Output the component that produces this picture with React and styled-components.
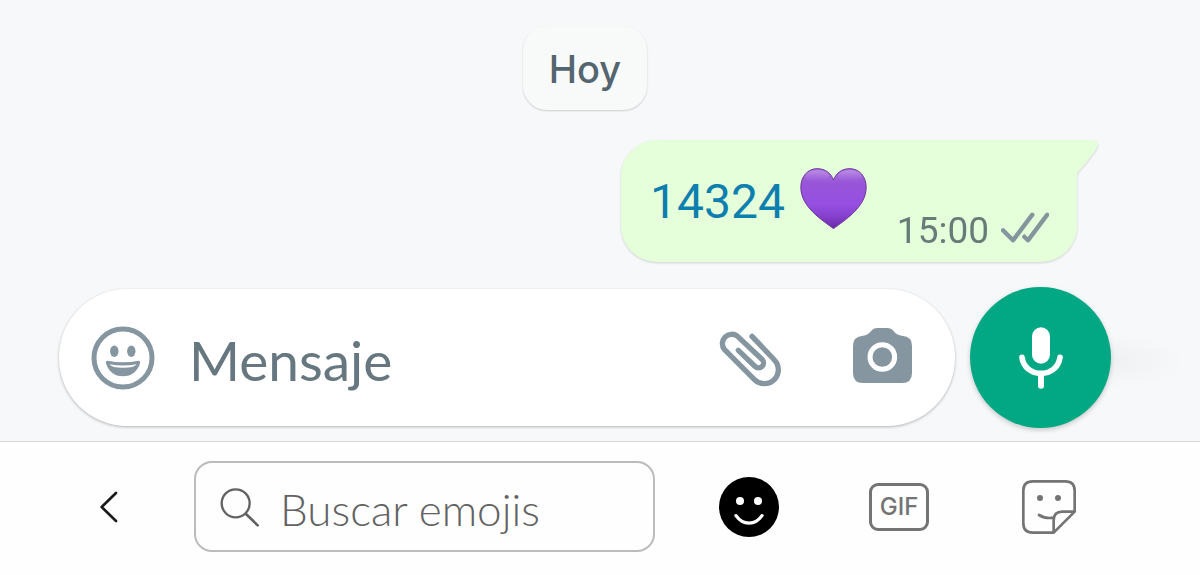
import React from 'react';
import styled, { createGlobalStyle } from 'styled-components';

const GlobalStyle = createGlobalStyle`
  * {
    box-sizing: border-box;
  }
  body {
    margin: 0;
    background-color: #fefefe;
    font-family: Lato, Roboto, sans-serif;
  }
  button {
    border: none;
    padding: 0;
    background: none;
    cursor: pointer;
  }
  svg {
    display: block;
    flex: none;
  }
`;

// message area above the keyboard
const Chat = styled.main`
  display: flex;
  flex-direction: column;
  padding: 26px 89px 13px 59px;
  background-color: #f6f8fa; // light grey
  border-bottom: 1px solid #d8d9da;
`;

const DateChip = styled.div`
  align-self: center;
  margin-bottom: 30px;
  padding: 21px 26px 19px;
  border-radius: 24px;
  background-color: #f8faf9;
  box-shadow: 0 1px 2px rgba(0, 0, 0, 0.18);
  color: #54656f;
  font-family: Inter, sans-serif;
  font-weight: 500;
  font-size: 38px;
  line-height: 44px;
`;

// drop-shadow so that the tail gets the same shadow as the bubble
const Bubble = styled.div`
  position: relative;
  display: flex;
  align-items: flex-end;
  align-self: flex-end;
  height: 122px;
  margin-right: 34px;
  margin-bottom: 25px;
  padding: 0 28px 12px 29px;
  border-radius: 36px 0 36px 36px;
  background-color: #e5ffdb; // light green
  filter: drop-shadow(0 1px 1px rgba(0, 0, 0, 0.16));
`;

const Tail = styled.svg`
  position: absolute;
  top: 0;
  left: 100%;
`;

const NumberLink = styled.a`
  margin-right: 15px;
  padding-bottom: 18px;
  color: #0d7fae; // blue
  font-family: Roboto, sans-serif;
  font-size: 48px;
  line-height: 60px;
  text-decoration: none;
`;

const HeartWrap = styled.span`
  margin-right: 30px;
  padding-bottom: 21px;
`;

const Time = styled.time`
  margin-right: 12px;
  color: #667c78;
  font-family: Roboto, sans-serif;
  font-size: 37px;
  line-height: 38px;
`;

const TickWrap = styled.span`
  padding-bottom: 6px;
`;

const Composer = styled.form`
  display: flex;
  align-items: center;
  gap: 15px;
`;

const MessageBox = styled.div`
  display: flex;
  align-items: center;
  flex: 1;
  min-width: 0;
  height: 137px;
  padding: 0 43px 0 32px;
  border-radius: 68px;
  background-color: #fff;
  box-shadow: 0 1px 3px rgba(0, 0, 0, 0.28);
`;

const TextField = styled.input`
  flex: 1;
  min-width: 0;
  border: none;
  outline: none;
  padding: 0;
  background: none;
  color: ${(props) => props.$color};
  font-family: ${(props) => props.$font};
  font-size: ${(props) => props.$size};
  font-weight: ${(props) => props.$weight};
  line-height: 64px;

  &::placeholder {
    color: ${(props) => props.$color};
    opacity: 1;
  }
`;

const MessageField = styled(TextField)`
  margin-left: 34px;
  padding-top: 4px;
`;

const IconButton = styled.button`
  color: #8696a0; // grey
`;

const CameraButton = styled(IconButton)`
  margin-left: 71px;
`;

const MicButton = styled.button`
  position: relative;
  display: flex;
  align-items: center;
  justify-content: center;
  width: 141px;
  height: 141px;
  border-radius: 50%;
  background-color: #02a884; // green
  box-shadow: 0 2px 5px rgba(0, 0, 0, 0.2);

  &::after {
    content: '';
    position: absolute;
    top: 46px;
    left: 100%;
    width: 76px;
    height: 56px;
    background: radial-gradient(ellipse at left, rgba(0, 0, 0, 0.03), transparent 70%);
  }
`;

const Keyboard = styled.nav`
  display: flex;
  align-items: center;
  padding: 19px 76px 23px 64px;
`;

const KeyButton = styled.button`
  display: flex;
  align-items: center;
  justify-content: center;
  width: ${(props) => props.$width};
  height: 91px;
  color: ${(props) => props.$color};
`;

const SearchBox = styled.label`
  display: flex;
  align-items: center;
  flex: 1;
  min-width: 0;
  height: 91px;
  margin: 0 19px 0 40px;
  padding: 0 24px;
  border: 2px solid #bcbcbc;
  border-radius: 18px;
`;

const SearchField = styled(TextField)`
  margin-left: 20px;
  padding-top: 4px;
`;

const GifBadge = styled.span`
  display: flex;
  align-items: center;
  justify-content: center;
  width: 60px;
  height: 48px;
  border: 3px solid #747474;
  border-radius: 9px;
  font-family: Inter, sans-serif;
  font-weight: 500;
  font-size: 24px;
  line-height: 24px;
`;

const Heart = () => (
  <svg width="67" height="61" viewBox="571 114 200 183" role="img" aria-label="corazón morado">
    <defs>
      <linearGradient id="heartFill" x1="0" y1="0" x2="0" y2="1">
        <stop offset="0" stopColor="#a873dc" />
        <stop offset="0.25" stopColor="#9855d8" />
        <stop offset="0.6" stopColor="#964fe2" />
        <stop offset="0.8" stopColor="#8540cc" />
        <stop offset="1" stopColor="#6a27a8" />
      </linearGradient>
      <linearGradient id="heartShine" x1="0" y1="0" x2="0" y2="1">
        <stop offset="0" stopColor="#d3b3ee" stopOpacity="0.45" />
        <stop offset="1" stopColor="#b47be6" stopOpacity="0" />
      </linearGradient>
    </defs>
    <path
      d="M671 296C640 272 573 232 573 172C573 138 595 116 622 116C647 116 664 130 671 150C678 130 695 116 720 116C747 116 769 138 769 172C769 232 702 272 671 296Z"
      fill="url(#heartFill)"
      stroke="#6b3399"
      strokeWidth="3"
    />
    <ellipse cx="622" cy="138" rx="36" ry="17" fill="url(#heartShine)" />
    <ellipse cx="720" cy="138" rx="36" ry="17" fill="url(#heartShine)" />
  </svg>
);

const Ticks = () => (
  <svg width="48" height="32" viewBox="393 247 144 96" fill="none" stroke="#84969c" strokeWidth="13" strokeLinecap="round" strokeLinejoin="round">
    <path d="M399 302L429 332L487 255" />
    <path d="M463 321L474 332L532 255" />
  </svg>
);

const Smile = () => (
  <svg width="64" height="64" viewBox="0 0 64 64" fill="currentColor">
    <circle cx="32" cy="32" r="29" fill="none" stroke="currentColor" strokeWidth="5" />
    <ellipse cx="23.3" cy="25.3" rx="4.2" ry="5.7" />
    <ellipse cx="40.3" cy="25.3" rx="4.2" ry="5.7" />
    <path d="M16.500 34.800Q32 37.800 47.500 34.800Q49.500 34.800 49 37.200C47 45 40.500 50.300 32 50.300C23.500 50.300 17 45 15 37.200Q14.500 34.800 16.500 34.800Z" />
    <path d="M18.500 38.200Q32 40.800 45.500 38.200Q43.500 41.800 32 41.800Q20.500 41.800 18.500 38.200Z" fill="#fff" />
  </svg>
);

const Clip = () => (
  <svg width="64" height="58" viewBox="56 85 192 174" fill="none" stroke="currentColor" strokeWidth="16" strokeLinecap="round" strokeLinejoin="round">
    <path d="M158 107L224.700 177.300A42 42 0 0 1 165.300 236.700L75 146A28 28 0 0 1 114 106.500L188.600 176.400A15 15 0 0 1 167.400 197.600L117 149" />
  </svg>
);

const Camera = () => (
  <svg width="59" height="59" viewBox="459 84 177 177">
    <path
      d="M489 107Q503 106 510 97Q519 84 533 84H561Q575 84 584 97Q591 106 606 107Q636 109 636 138V219Q636 249 606 249H489Q459 249 459 219V138Q459 109 489 107Z"
      fill="currentColor"
    />
    <circle cx="547" cy="171" r="37" fill="none" stroke="#fff" strokeWidth="15" />
  </svg>
);

const Mic = () => (
  <svg width="44" height="62" viewBox="207 157 132 186" fill="none" stroke="#fff">
    <rect x="246" y="158" width="54" height="109" rx="27" fill="#fff" stroke="none" />
    <path d="M216 248C220 278 244 296 273 296C302 296 326 278 330 248" strokeWidth="17" strokeLinecap="round" />
    <path d="M273 298V333" strokeWidth="18" strokeLinecap="round" />
  </svg>
);

const Back = () => (
  <svg width="18" height="32" viewBox="61 165 54 96" fill="none" stroke="currentColor" strokeWidth="8" strokeLinecap="round" strokeLinejoin="round">
    <path d="M109 171L66 213L109 255" />
  </svg>
);

const Magnifier = () => (
  <svg width="40" height="40" viewBox="420 156 120 120" fill="none" stroke="#626262" strokeLinecap="round">
    <circle cx="467" cy="205" r="42" strokeWidth="7" />
    <path d="M498 237L533 271" strokeWidth="8" />
  </svg>
);

const EmojiFace = () => (
  <svg width="60" height="60" viewBox="957 126 180 180">
    <circle cx="1047" cy="216" r="90" fill="currentColor" />
    <circle cx="1020" cy="198" r="12" fill="#fff" />
    <circle cx="1074" cy="198" r="12" fill="#fff" />
    <path d="M1008 242C1029 272 1065 272 1086 242" fill="none" stroke="#fff" strokeWidth="10" strokeLinecap="round" />
  </svg>
);

const Sticker = () => (
  <svg width="54" height="54" viewBox="516 60 162 162" fill="none" stroke="currentColor" strokeWidth="8" strokeLinecap="round" strokeLinejoin="round">
    <path d="M674 155V92Q674 64 646 64H548Q520 64 520 92V190Q520 218 548 218H611L674 155H637Q611 155 611 181V218" />
    <path d="M567 165Q586 177 611 173" />
    <circle cx="570" cy="114" r="9" fill="currentColor" stroke="none" />
    <circle cx="624" cy="114" r="9" fill="currentColor" stroke="none" />
  </svg>
);

class App extends React.Component {
  render() {
    return (
      <React.Fragment>
        <GlobalStyle />
        <Chat>
          <DateChip>Hoy</DateChip>

          <Bubble>
            <NumberLink href="tel:14324">14324</NumberLink>
            <HeartWrap><Heart /></HeartWrap>
            <Time>15:00</Time>
            <TickWrap><Ticks /></TickWrap>
            <Tail width="22" height="34" viewBox="0 0 22 34">
              <path d="M-1 0H15Q22 0 20 7Q19 10 16 14L0 33.500H-1Z" fill="#e5ffdb" />
            </Tail>
          </Bubble>

          <Composer onSubmit={(e) => e.preventDefault()}>
            <MessageBox>
              <IconButton type="button" aria-label="Emojis"><Smile /></IconButton>
              <MessageField
                $color="#667780"
                $font="Lato, sans-serif"
                $size="55px"
                $weight="400"
                placeholder="Mensaje"
                aria-label="Mensaje"
              />
              <IconButton type="button" aria-label="Adjuntar"><Clip /></IconButton>
              <CameraButton type="button" aria-label="Cámara"><Camera /></CameraButton>
            </MessageBox>
            <MicButton type="button" aria-label="Grabar audio"><Mic /></MicButton>
          </Composer>
        </Chat>

        <Keyboard>
          <KeyButton $width="90px" $color="#1a1a1a" aria-label="Volver"><Back /></KeyButton>
          <SearchBox>
            <Magnifier />
            <SearchField
              $color="#626262"
              $font="Lato, sans-serif"
              $size="44px"
              $weight="300"
              placeholder="Buscar emojis"
              aria-label="Buscar emojis"
            />
          </SearchBox>
          <KeyButton $width="150px" $color="#000" aria-label="Emojis"><EmojiFace /></KeyButton>
          <KeyButton $width="150px" $color="#747474"><GifBadge>GIF</GifBadge></KeyButton>
          <KeyButton $width="150px" $color="#747474" aria-label="Stickers"><Sticker /></KeyButton>
        </Keyboard>
      </React.Fragment>
    );
  }
}

export default App;
